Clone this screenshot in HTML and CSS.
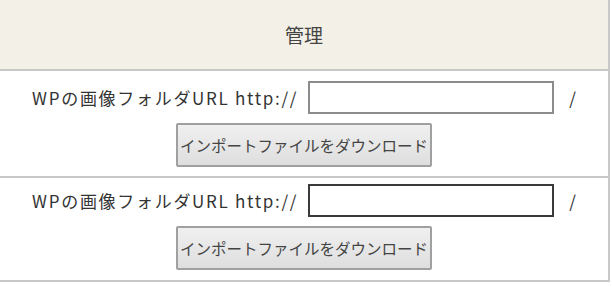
FILE: index.html
```html
<!DOCTYPE html>
<html lang="ja">
  <head>
    <meta charset="UTF-8" />
    <meta name="viewport" content="width=device-width, initial-scale=1.0" />
    <title>管理</title>
    <link rel="stylesheet" href="styles.css">
  </head>
  <body>
    <table class="adminTable">
      <thead>
        <tr>
          <th class="adminTable__head">管理</th>
        </tr>
      </thead>
      <tbody>
        <tr>
          <td class="adminTable__cell">
            <div class="urlLine">
              <label for="wpUrl1" class="urlLabel">WPの画像フォルダURL http://</label>
              <input type="text" id="wpUrl1" class="urlInput" />
              <span class="urlSlash">/</span>
            </div>
            <button type="button" class="importButton">インポートファイルをダウンロード</button>
          </td>
        </tr>
        <tr>
          <td class="adminTable__cell adminTable__cell--last">
            <div class="urlLine">
              <label for="wpUrl2" class="urlLabel">WPの画像フォルダURL http://</label>
              <input type="text" id="wpUrl2" class="urlInput urlInput--focus" />
              <span class="urlSlash">/</span>
            </div>
            <button type="button" class="importButton">インポートファイルをダウンロード</button>
          </td>
        </tr>
      </tbody>
    </table>
  </body>
</html>
```

FILE: styles.css
```css
body {
  margin: 0;
  background-color: #ffffff;
  font-family: "Noto Sans CJK JP", "Noto Sans", sans-serif;
  color: #333333;
}

.adminTable {
  width: 610px;
  border-collapse: collapse;
  border-right: 2px solid #c8c8c8;
  border-bottom: 2px solid #c8c8c8;
}

.adminTable__head {
  height: 69px;
  padding: 0;
  background-color: #f3f0e7;
  border-bottom: 2px solid #c8c8c8;
  font-size: 19px;
  font-weight: normal;
  color: #444444;
}

.adminTable__cell {
  padding: 10px 0 9px 0;
  text-align: center;
  border-bottom: 2px solid #c8c8c8;
}

.adminTable__cell--last {
  padding-top: 6px;
  padding-bottom: 10px;
}

.urlLine {
  display: flex;
  justify-content: center;
  align-items: center;
  gap: 10px;
}

.urlLabel {
  font-size: 17px;
  letter-spacing: 1.7px;
}

.urlInput {
  box-sizing: border-box;
  width: 246px;
  height: 33px;
  margin: 0;
  border: 2px solid #8c8c8c;
  background-color: #ffffff;
}

.urlInput--focus {
  border-color: #3a3a3a;
}

.urlSlash {
  font-size: 17px;
  margin-left: 5px;
}

.importButton {
  box-sizing: border-box;
  width: 256px;
  height: 44px;
  margin-top: 9px;
  padding: 0;
  font-family: "Noto Sans CJK JP", sans-serif;
  font-size: 15.5px;
  color: #444444;
  background: linear-gradient(#f0f0f0, #dedede);
  border: 2px solid #a0a0a0;
  border-radius: 2px;
}
```
